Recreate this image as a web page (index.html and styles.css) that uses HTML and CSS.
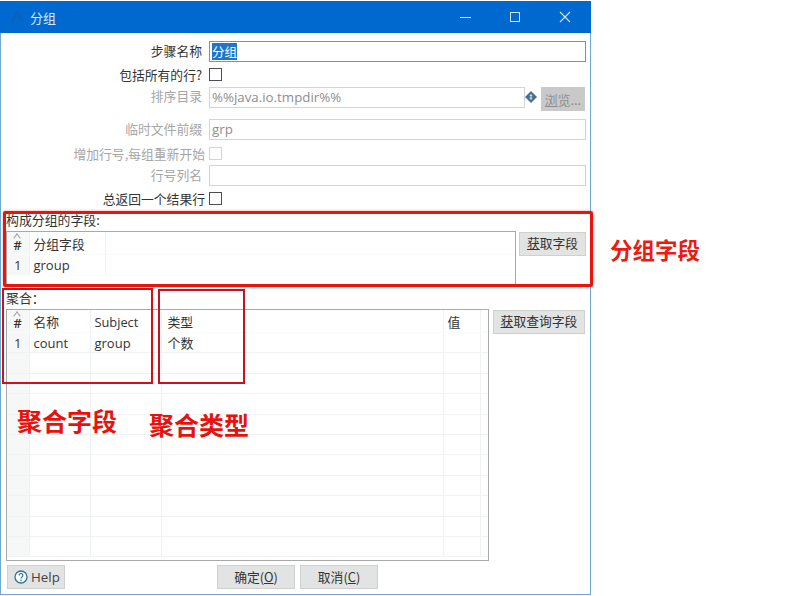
FILE: index.html
```html
<!DOCTYPE html>
<html lang="zh">
<head>
<meta charset="utf-8">
<title>分组</title>
<link rel="stylesheet" href="styles.css">
</head>
<body>
<div class="window">
  <header class="titlebar">
    <svg class="app-icon" width="14" height="14" viewBox="0 0 14 14"><path d="M2 12 7 2l5 10" fill="none" stroke="#0a62bd" stroke-width="2"/></svg>
    <span class="title">分组</span>
    <div class="controls">
      <svg width="12" height="12" viewBox="0 0 12 12"><path d="M1 6.5h11" stroke="#cfe6fb" stroke-width="1"/></svg>
      <svg width="12" height="12" viewBox="0 0 12 12"><rect x="1.5" y="1.5" width="9" height="9" fill="none" stroke="#cfe6fb"/></svg>
      <svg width="12" height="12" viewBox="0 0 12 12"><path d="M1 1l10 10M11 1 1 11" stroke="#cfe6fb" stroke-width="1.1"/></svg>
    </div>
  </header>

  <main class="content">
    <section class="form">
      <div class="row row-first">
        <label class="lbl lift">步骤名称</label>
        <div class="input focus"><span class="sel">分组</span></div>
      </div>
      <div class="row row-check1">
        <label class="lbl">包括所有的行?</label>
        <span class="check"></span>
      </div>
      <div class="row row-dir">
        <label class="lbl off">排序目录</label>
        <div class="input off dir">%%java.io.tmpdir%%</div>
        <svg class="var-icon" width="12" height="12" viewBox="0 0 12 12"><path d="M6 0l6 6-6 6-6-6z" fill="#4a6f8f"/><path d="M6 3v6M4.6 4.6h2.6M4.6 7.2h2.6" stroke="#dfe8ef" stroke-width=".9"/></svg>
        <button class="btn disabled browse"><u>浏</u>览...</button>
      </div>
      <div class="row row-prefix">
        <label class="lbl off lift">临时文件前缀</label>
        <div class="input off">grp</div>
      </div>
      <div class="row row-add">
        <label class="lbl off wide">增加行号,每组重新开始</label>
        <span class="check off"></span>
      </div>
      <div class="row row-col">
        <label class="lbl off lift">行号列名</label>
        <div class="input off"></div>
      </div>
      <div class="row row-total">
        <label class="lbl wide">总返回一个结果行</label>
        <span class="check"></span>
      </div>
    </section>

    <div class="section-label first">构成分组的字段:</div>
    <section class="group-fields">
      <div class="grid-box box-top">
        <table class="tbl tbl-top">
          <colgroup><col class="c-num"><col class="c-top"><col></colgroup>
          <tr class="head"><th class="num sort">#</th><th>分组字段</th><th></th></tr>
          <tr><td class="num">1</td><td>group</td><td></td></tr>
        </table>
      </div>
      <button class="btn get"><u>获</u>取字段</button>
    </section>

    <div class="section-label second">聚合：</div>
    <section class="agg-fields">
      <div class="grid-box box-agg">
        <table class="tbl tbl-agg">
          <colgroup><col class="c-num"><col class="c-name"><col class="c-subj"><col class="c-type"><col class="c-val"><col></colgroup>
          <tr class="head"><th class="num sort">#</th><th>名称</th><th>Subject</th><th>类型</th><th>值</th><th></th></tr>
          <tr><td class="num">1</td><td>count</td><td>group</td><td>个数</td><td></td><td></td></tr>
          <tr><td class="num"></td><td></td><td></td><td></td><td></td><td></td></tr>
          <tr><td class="num"></td><td></td><td></td><td></td><td></td><td></td></tr>
          <tr><td class="num"></td><td></td><td></td><td></td><td></td><td></td></tr>
          <tr><td class="num"></td><td></td><td></td><td></td><td></td><td></td></tr>
          <tr><td class="num"></td><td></td><td></td><td></td><td></td><td></td></tr>
          <tr><td class="num"></td><td></td><td></td><td></td><td></td><td></td></tr>
          <tr><td class="num"></td><td></td><td></td><td></td><td></td><td></td></tr>
          <tr><td class="num"></td><td></td><td></td><td></td><td></td><td></td></tr>
          <tr><td class="num"></td><td></td><td></td><td></td><td></td><td></td></tr>
          <tr><td class="num"></td><td></td><td></td><td></td><td></td><td></td></tr>
        </table>
      </div>
      <button class="btn get-query"><u>获</u>取查询字段</button>
    </section>

    <footer class="footer">
      <button class="btn help">
        <svg width="14" height="14" viewBox="0 0 14 14"><circle cx="7" cy="7" r="6" fill="#fff" stroke="#2f7396" stroke-width="1.3"/><path d="M5.1 5.4a1.9 1.9 0 1 1 2.9 1.6c-.7.4-1 .8-1 1.5" fill="none" stroke="#2f7396" stroke-width="1.2"/><circle cx="7" cy="10.3" r=".8" fill="#2f7396"/></svg>
        <span>Help</span>
      </button>
      <button class="btn action ok">确定(<u>O</u>)</button>
      <button class="btn action">取消(<u>C</u>)</button>
    </footer>
  </main>
</div>

<div class="mark mark-group"></div>
<div class="mark mark-agg"></div>
<div class="mark mark-type"></div>
<div class="note note-group">分组字段</div>
<div class="note note-agg">聚合字段</div>
<div class="note note-type">聚合类型</div>
</body>
</html>
```

FILE: styles.css
```css
* { box-sizing: border-box; }
html, body { margin: 0; height: 596px; overflow: hidden; background: #fff; }
body {
  padding-top: 1px;
  font-family: "Open Sans", "Noto Sans CJK SC", sans-serif;
  font-size: 12px;
  color: #333;
  position: relative;
}
.window {
  width: 591px;
  height: 594px;
  border: 1px solid #6ea9cf;
  border-top: 0;
  display: flex;
  flex-direction: column;
  background: #fff;
}
.titlebar {
  height: 32px;
  margin: 0 -1px;
  background: #0069d0;
  display: flex;
  align-items: center;
  padding-left: 10px;
  color: #d5e8fa;
  flex: none;
}
.app-icon { flex: none; }
.title { margin-left: 6px; font-size: 13px; font-family: "Noto Sans CJK SC", sans-serif; }
.controls {
  margin-left: auto;
  display: flex;
  gap: 38px;
  padding-right: 20px;
}
.controls svg { display: block; }
.content { flex: 1; display: flex; flex-direction: column; min-height: 0; padding-left: 5px; }

.form { padding-top: 8px; }
.row { display: flex; align-items: center; }
.lbl {
  width: 203px;
  margin-left: -5px;
  padding-right: 2px;
  text-align: right;
  font-family: "Noto Sans CJK SC", sans-serif;
  font-size: 12.8px;
  color: #333;
  flex: none;
  white-space: nowrap;
}
.lbl.wide { padding-right: 0; width: 204px; margin-right: -1px; }
.lbl.off { color: #a6a6a6; }
.lbl.lift { padding-bottom: 3px; }
.lbl + * { margin-left: 5px; }
.row-first { height: 21px; }
.row-check1 { height: 13px; margin-top: 6px; }
.row-dir { height: 24px; margin-top: 6px; align-items: flex-start; }
.row-dir .lbl { line-height: 18px; }
.row-prefix { height: 21px; margin-top: 8px; }
.row-add { height: 13px; margin-top: 7px; }
.row-col { height: 21px; margin-top: 5px; }
.row-total { height: 13px; margin-top: 6px; }
.input {
  width: 377px;
  height: 21px;
  border: 1px solid #d4d4d4;
  background: #fff;
  padding: 0 2px;
  font-size: 13.3px;
  line-height: 19px;
  color: #333;
  font-family: "Open Sans", "Noto Sans CJK SC", sans-serif;
}
.input.off { color: #8e8e8e; background: #fff; }
.input.focus { border: 1px solid #5c9bd1; font-family: "Noto Sans CJK SC", sans-serif; font-size: 12.5px; }
.input.dir { width: 316px; }
.sel { background: #1e75c9; color: #fff; display: inline-block; line-height: 17px; margin-top: 1px; vertical-align: top; }
.check { width: 13px; height: 13px; border: 1px solid #4d4d4d; background: #fff; flex: none; }
.check.off { border-color: #d4d4d4; }
.var-icon { margin-top: 4px; flex: none; }

.btn {
  border: 1px solid #d0d0d0;
  background: #e2e3e3;
  color: #333;
  font-family: "Noto Sans CJK SC", sans-serif;
  font-size: 12.8px;
  padding: 0;
  flex: none;
}
.btn.disabled { background: #c9c9c9; border-color: #c9c9c9; color: #8f8f8f; }
.browse { width: 44px; height: 24px; margin-left: 4px; }

.section-label {
  font-family: "Noto Sans CJK SC", sans-serif;
  font-size: 12.9px;
  color: #333;
  line-height: 16px;
  height: 16px;
}
.section-label.first { margin-top: 7px; margin-left: 0; }
.section-label.second { margin-top: 5px; margin-left: 0; }

.group-fields, .agg-fields { display: flex; align-items: flex-start; }
.group-fields { margin-top: 3px; }
.agg-fields { margin-top: 3px; }
.grid-box { border: 1px solid #a9a9a9; background: #fff; overflow: hidden; flex: none; }
.box-top { width: 510px; height: 54px; }
.box-agg { width: 483px; height: 252px; }
.get { width: 67px; height: 24px; margin: 1px 0 0 3px; padding-bottom: 3px; }
.get-query { width: 92px; height: 24px; margin: 1px 0 0 4px; padding-bottom: 3px; }

.tbl { border-collapse: collapse; table-layout: fixed; width: 100%; }
.tbl th, .tbl td {
  border-right: 1px solid #eef2f3;
  border-bottom: 1px solid #f0f3f4;
  padding: 0 0 0 4px;
  height: 20.4px;
  font-weight: 400;
  text-align: left;
  font-size: 13px;
  color: #333;
  white-space: nowrap;
  overflow: hidden;
}
.tbl th { font-family: "Open Sans", "Noto Sans CJK SC", sans-serif; font-size: 12.8px; height: 21px; padding-top: 1px; }
.tbl .head th { border-bottom-color: #f9fafa; }
.tbl .num { background: #f6f8f8; text-align: center; padding-left: 0; }
.tbl .sort { position: relative; padding-top: 4px; font-weight: 600; }
.tbl .sort::before {
  content: "";
  position: absolute;
  left: 7px;
  top: 3px;
  width: 5px;
  height: 5px;
  border-left: 1px solid #999;
  border-top: 1px solid #999;
  transform: rotate(45deg) skew(8deg, 8deg);
}
.tbl-top tr:not(.head) td { border-bottom: 0; }
.tbl-top th:last-child, .tbl-top td:last-child { border-right: 0; }
.tbl-agg th:last-child, .tbl-agg td:last-child { border-right: 0; }
.c-num { width: 22px; }
.c-top { width: 76px; }
.c-name { width: 61px; }
.c-subj { width: 71px; }
.c-type { width: 282px; }
.c-val { width: 37px; }
.tbl-agg td:nth-child(4), .tbl-agg th:nth-child(4) { padding-left: 6px; }

.footer { display: flex; align-items: flex-start; margin-top: 4px; }
.help {
  width: 58px;
  height: 24px;
  margin-left: 1px;
  display: flex;
  align-items: center;
  gap: 3px;
  padding-left: 6px;
  font-family: "Open Sans", sans-serif;
  font-size: 13.3px;
  color: #444;
}
.help svg { display: block; flex: none; }
.action { width: 78px; height: 24px; padding-bottom: 2px; }
.ok { margin-left: 152px; margin-right: 5px; }

.mark { position: absolute; pointer-events: none; }
.mark-group {
  left: 3px; top: 211px; width: 590px; height: 76px;
  border: 3px solid #e8150d;
  border-radius: 2px;
  box-shadow: 0 0 3px rgba(200, 40, 30, .45);
}
.mark-agg { left: 2px; top: 288px; width: 151px; height: 96px; border: 2px solid #d2101a; }
.mark-type { left: 158px; top: 289px; width: 87px; height: 95px; border: 2px solid #c9121e; }
.note {
  position: absolute;
  font-family: "Noto Sans CJK SC", sans-serif;
  font-weight: 700;
  color: #e8110c;
  white-space: nowrap;
  line-height: 1;
}
.note-group { left: 610px; top: 238px; font-size: 22.5px; color: #ee1a10; }
.note-agg { left: 17px; top: 408px; font-size: 25px; }
.note-type { left: 149px; top: 412px; font-size: 25px; }
```
